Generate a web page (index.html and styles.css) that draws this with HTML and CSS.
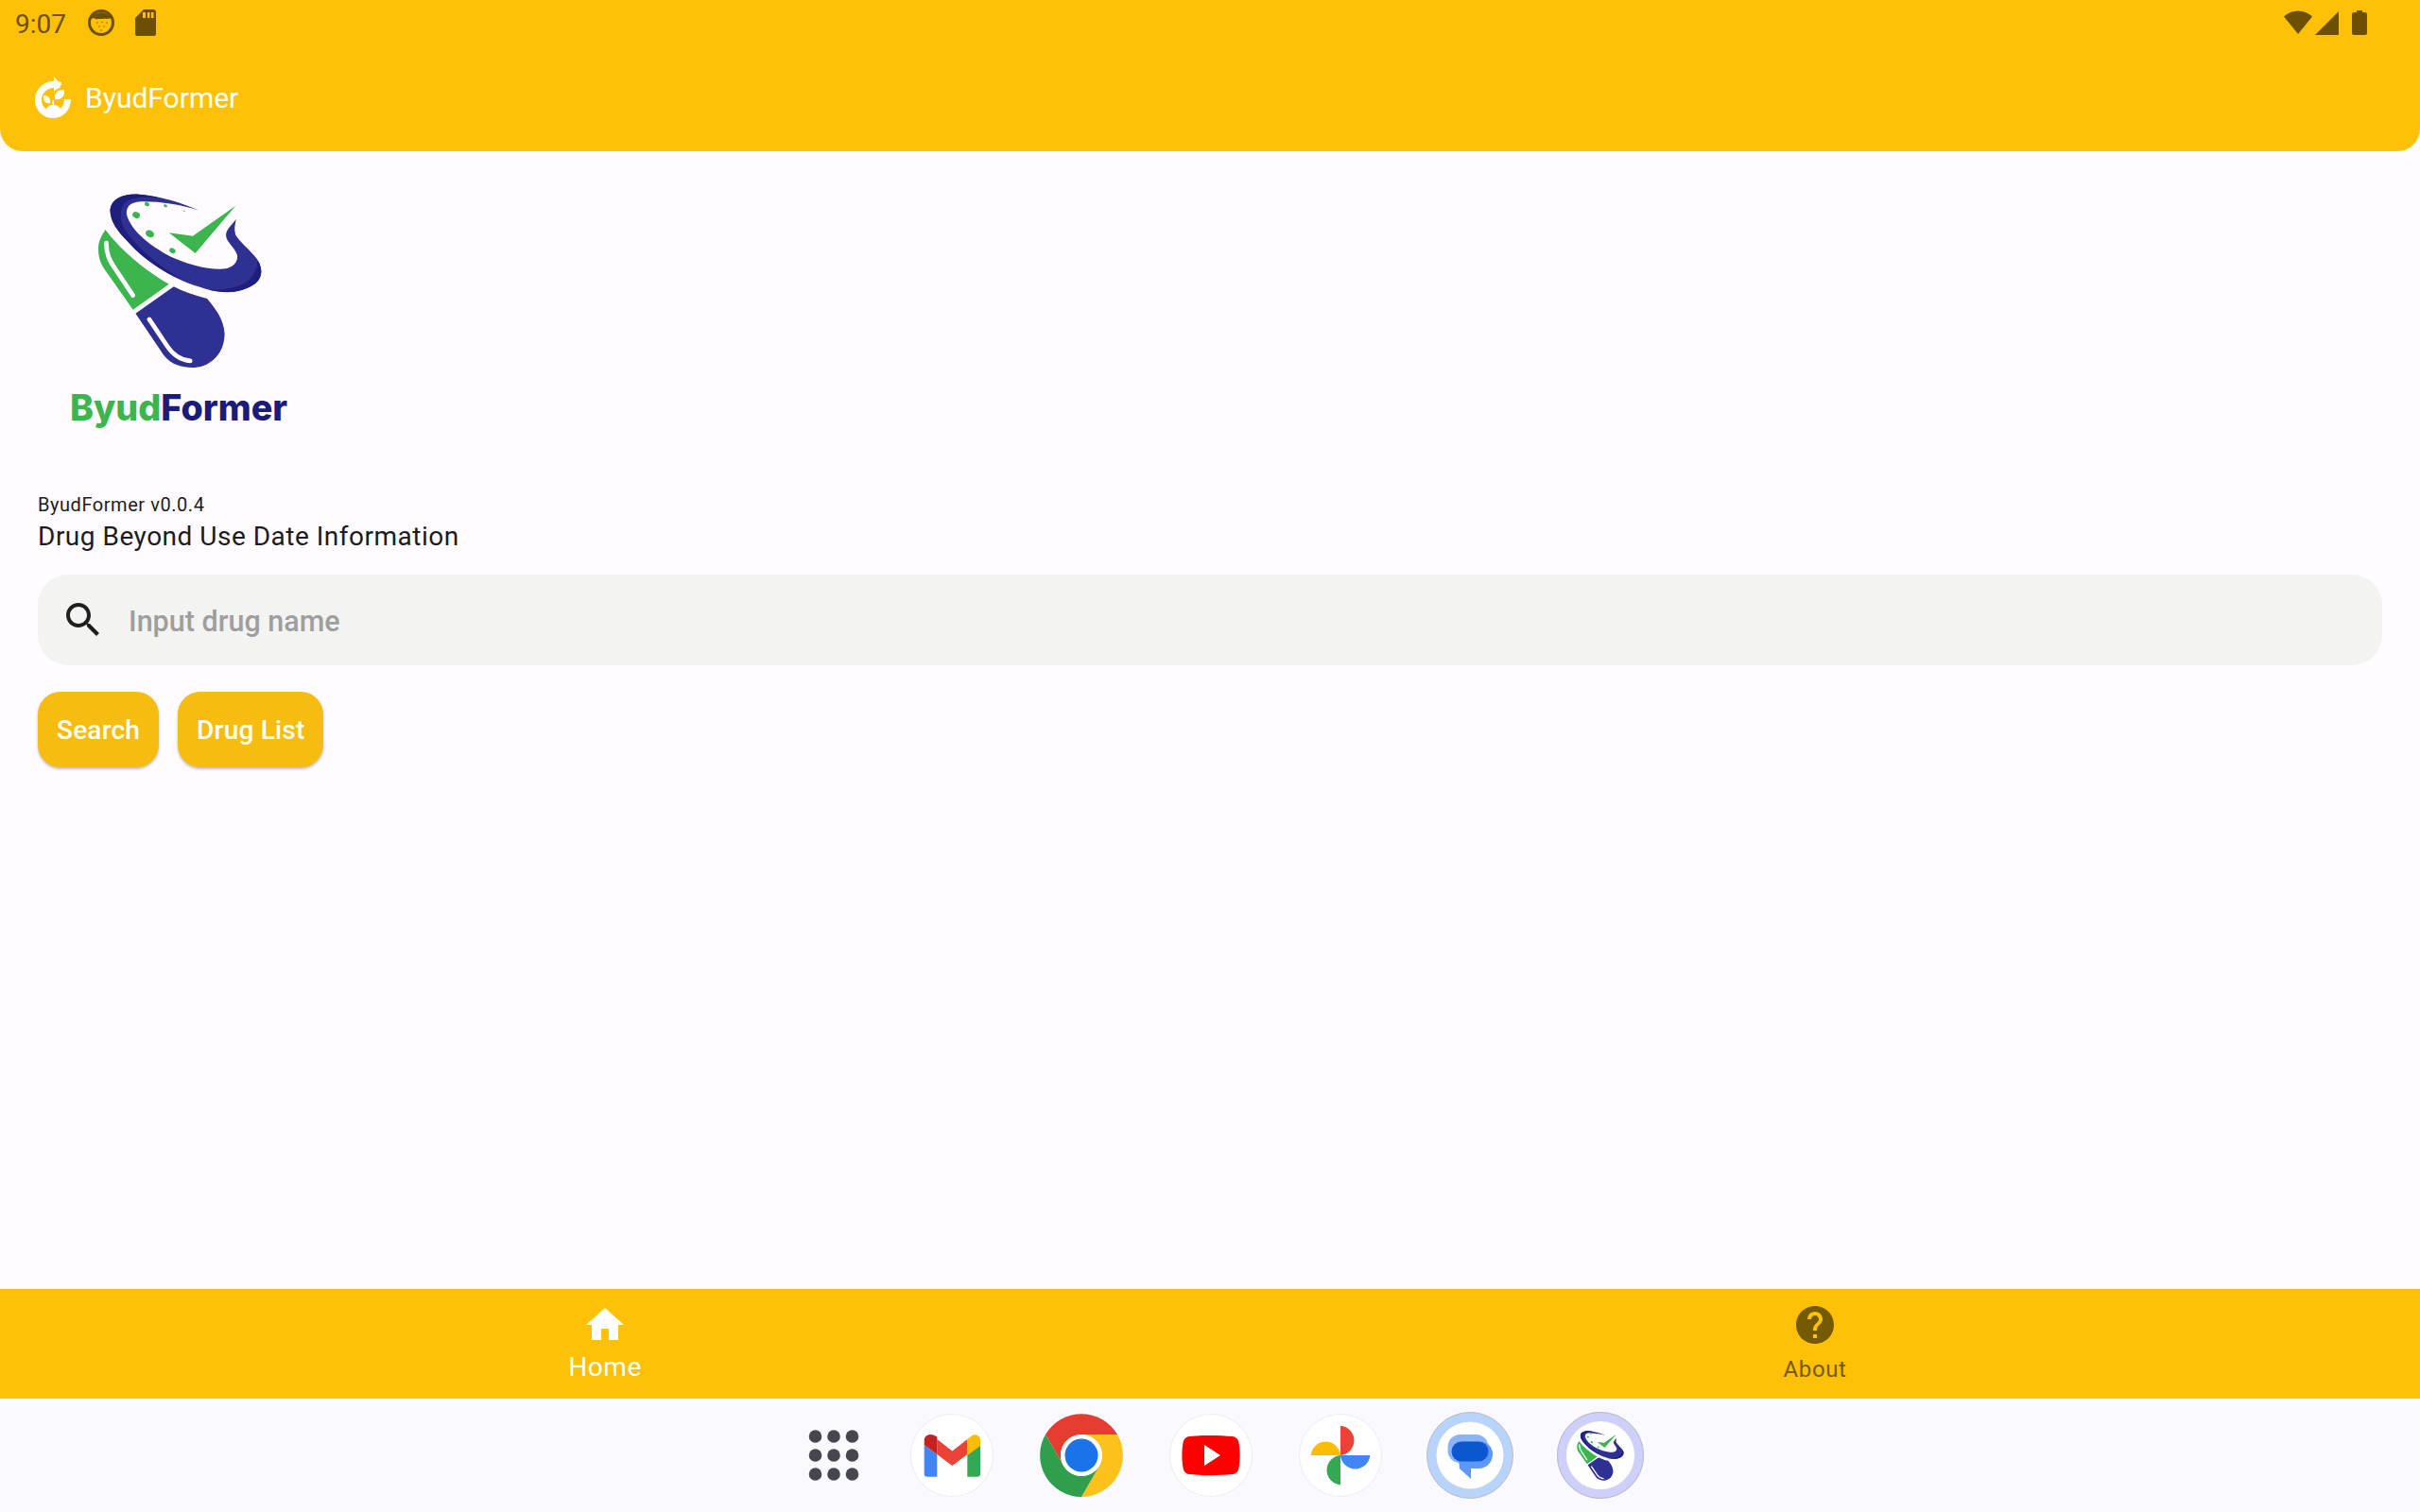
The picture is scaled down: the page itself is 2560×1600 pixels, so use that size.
FILE: index.html
```html
<!DOCTYPE html>
<html lang="en">
<head>
<meta charset="utf-8">
<title>ByudFormer</title>
<link rel="stylesheet" href="styles.css">
</head>
<body>
<svg class="defs" width="0" height="0" aria-hidden="true">
  <symbol id="brand" viewBox="190 75 520 550">
    <path fill="#3cb54f" d="M215 188 C200 212 192 228 193 250 C193 275 200 295 212 312 L302 440 L415 360 C340 315 270 260 215 188 Z"/>
    <path fill="none" stroke="#fffbff" stroke-width="14" stroke-linecap="round" d="M218 230 C218 265 228 285 245 310 L302 395"/>
    <path fill="#2e3192" d="M430 367 L310 452 L400 585 C425 615 460 623 495 622 C550 618 590 575 590 515 C588 470 560 435 535 405 C495 395 460 382 430 367 Z"/>
    <path fill="none" stroke="#fffbff" stroke-width="14" stroke-linecap="round" d="M353 470 L410 555 C430 585 452 598 482 601"/>
    <path fill="#2e3192" d="M510 128 C450 108 380 98 320 100 C288 102 275 125 285 150 C300 190 345 230 400 262 C460 295 530 312 575 312 C610 312 632 295 630 270 C625 245 590 225 595 200 C598 185 615 170 626 155 C624 170 618 185 625 205 C640 230 680 262 695 285 C712 315 708 345 680 362 C640 388 570 392 510 368 C420 340 340 285 290 230 C255 195 230 165 230 125 C235 90 270 75 320 77 C390 82 460 105 510 128 Z"/>
    <path fill="#1e1f7c" d="M320 77 C270 75 235 90 230 125 C230 165 255 195 290 230 C330 275 390 318 455 345 C380 300 320 250 278 190 C258 160 258 120 280 100 C300 85 350 82 400 92 C375 84 345 78 320 77 Z"/>
    <path fill="#1e1f7c" d="M695 285 C712 315 708 345 680 362 C640 388 590 390 540 377 C590 380 650 368 672 340 C690 320 692 300 695 285 Z"/>
    <path fill="#3cb54f" d="M415 198 L490 208 L625 113 L498 262 Z"/>
    <ellipse fill="#3cb54f" cx="312" cy="142" rx="12" ry="10" transform="rotate(25 312 142)"/>
    <ellipse fill="#3cb54f" cx="346" cy="108" rx="8" ry="6" transform="rotate(25 346 108)"/>
    <ellipse fill="#3cb54f" cx="404" cy="113" rx="6" ry="4" transform="rotate(30 404 113)"/>
    <circle fill="#3cb54f" cx="463" cy="130" r="2"/>
    <ellipse fill="#3cb54f" cx="355" cy="201" rx="14" ry="11" transform="rotate(30 355 201)"/>
    <ellipse fill="#3cb54f" cx="426" cy="254" rx="10" ry="8" transform="rotate(30 426 254)"/>
  </symbol>
</svg>

<div class="screen">
  <header class="appbar">
    <div class="status">
      <span class="clock">9:07</span>
      <svg class="st-face" viewBox="0 0 30 30"><circle cx="15" cy="15" r="12.5" fill="none" stroke="#6b5000" stroke-width="3"/><path fill="#6b5000" d="M4 11 C7 2 23 2 26 11 C23 9.500 22 12 19 10.500 C16 12 13 10 10 11.500 C8 10 6 10 4 11 Z"/><g fill="#8a6a00"><circle cx="11" cy="15" r=".8"/><circle cx="16" cy="14.500" r=".8"/><circle cx="21" cy="15" r=".8"/><circle cx="13" cy="19" r=".8"/><circle cx="18" cy="19" r=".8"/><circle cx="15" cy="23" r=".8"/></g></svg>
      <svg class="st-sd" viewBox="0 0 22 28"><path fill="#6b5000" fill-rule="evenodd" d="M9 0 H19 A3 3 0 0 1 22 3 V26 A2 2 0 0 1 20 28 H2 A2 2 0 0 1 0 26 V9 Z M8 3 V9 H11 V3 Z M13 3 V9 H15.500 V3 Z M17 3 V9 H19.500 V3 Z"/></svg>
      <span class="spacer"></span>
      <svg class="st-wifi" viewBox="0 0 30 26"><path fill="#6b5000" d="M0 6.500 C8 -1.500 22 -1.500 30 6.500 L15 25 Z"/></svg>
      <svg class="st-signal" viewBox="0 0 25 25"><path fill="#6b5000" d="M25 0 V25 H0 Z"/></svg>
      <svg class="st-batt" viewBox="0 0 16 26"><path fill="#6b5000" d="M5 0 H11 V2 H14 A2 2 0 0 1 16 4 V24 A2 2 0 0 1 14 26 H2 A2 2 0 0 1 0 24 V4 A2 2 0 0 1 2 2 H5 Z"/></svg>
    </div>
    <div class="titlebar">
      <svg class="app-icon" viewBox="0 0 38 44"><path fill="none" stroke="#fff" stroke-width="7" d="M27 9.500 C14 5 3.500 14 3.500 25 C3.500 34 11 40.500 19 40.500 C28 40.500 34.500 33 34.500 24"/><path fill="#fff" d="M20 0 L28 9 L20 16 Z"/><path fill="#fff" d="M21 24 C20 17 24 14 31 14 C32 21 28 25 21 24 Z M16 28 C11 29 9 26 9 20 C14 20 17 23 16 28 Z M11 36 C13 31 16 30 18.500 30 V25 H20 V30 C24 30 27 33 28 36 C23 40 16 40 11 36 Z"/></svg>
      <span class="app-title">ByudFormer</span>
    </div>
  </header>

  <main class="content">
    <svg class="logo"><use href="#brand"/></svg>
    <div class="wordmark"><span class="wm-green">Byud</span><span class="wm-navy">Former</span></div>
    <p class="version">ByudFormer v0.0.4</p>
    <p class="subtitle">Drug Beyond Use Date Information</p>
    <div class="searchbox">
      <svg class="search-icon" viewBox="0 0 24 24"><path fill="#1f1f1f" d="M15.500 14h-.79l-.28-.27C15.410 12.590 16 11.110 16 9.500 16 5.910 13.090 3 9.500 3S3 5.910 3 9.500 5.910 16 9.500 16c1.610 0 3.090-.59 4.230-1.570l.27.28v.79l5 4.990L20.490 19l-4.990-5zm-6 0C7.010 14 5 11.990 5 9.500S7.010 5 9.500 5 14 7.010 14 9.500 11.990 14 9.500 14z"/></svg>
      <span class="placeholder">Input drug name</span>
    </div>
    <div class="actions">
      <button class="btn">Search</button>
      <button class="btn">Drug List</button>
    </div>
  </main>

  <nav class="bottomnav">
    <div class="navitem active">
      <svg class="nav-icon" viewBox="0 0 24 24"><path fill="#fff" d="M10 20v-6h4v6h5v-8h3L12 3 2 12h3v8z"/></svg>
      <span class="nav-label">Home</span>
    </div>
    <div class="navitem">
      <svg class="nav-icon" viewBox="0 0 24 24"><path fill="#745a00" d="M12 2C6.480 2 2 6.480 2 12s4.480 10 10 10 10-4.480 10-10S17.520 2 12 2zm1 17h-2v-2h2v2zm2.070-7.750l-.9.920C13.450 12.900 13 13.500 13 15h-2v-.5c0-1.100.45-2.100 1.170-2.830l1.240-1.260c.37-.36.59-.86.59-1.410 0-1.100-.9-2-2-2s-2 .9-2 2H8c0-2.210 1.790-4 4-4s4 1.790 4 4c0 .88-.36 1.680-.93 2.250z"/></svg>
      <span class="nav-label">About</span>
    </div>
  </nav>

  <footer class="taskbar">
    <svg class="apps" viewBox="0 0 65 64"><g fill="#46464f"><circle cx="13.500" cy="12" r="6.800"/><circle cx="33" cy="12" r="6.800"/><circle cx="52.500" cy="12" r="6.800"/><circle cx="13.500" cy="32" r="6.800"/><circle cx="33" cy="32" r="6.800"/><circle cx="52.500" cy="32" r="6.800"/><circle cx="13.500" cy="52" r="6.800"/><circle cx="33" cy="52" r="6.800"/><circle cx="52.500" cy="52" r="6.800"/></g></svg>

    <svg class="dock-icon" viewBox="0 0 88 88"><circle class="plate" cx="44" cy="44" r="43.500"/>
      <path fill="#4285f4" d="M14.700 33 L28.300 43 V66.700 H17.700 A3 3 0 0 1 14.700 63.700 Z"/>
      <path fill="#34a853" d="M74 33 L60.300 43 V66.700 H71 A3 3 0 0 0 74 63.700 Z"/>
      <path fill="#ea4335" d="M28.300 27 L44.300 39.500 L60.300 27 V43 L44.300 55 L28.300 43 Z"/>
      <path fill="#c5221f" d="M14.700 28 C14.700 21.500 23 20 28.300 24.500 V43 L14.700 33 Z"/>
      <path fill="#fbbc04" d="M60.300 27 L64 24 C68 20.500 74 22.500 74 28 V34 L60.300 44 Z"/>
    </svg>

    <svg class="dock-icon" viewBox="0 0 88 88">
      <path fill="#e53d2f" d="M6 22 A44 44 0 0 1 82 22 L44 22 A22 22 0 0 0 25 55 Z"/>
      <path fill="#fcc219" d="M82 22 A44 44 0 0 1 44 88 L63 55 A22 22 0 0 0 44 22 Z"/>
      <path fill="#2f9e4d" d="M44 88 A44 44 0 0 1 6 22 L25 55 A22 22 0 0 0 63 55 Z"/>
      <circle cx="44" cy="44" r="22" fill="#fff"/><circle cx="44" cy="44" r="17.500" fill="#1a73e8"/>
    </svg>

    <svg class="dock-icon" viewBox="0 0 88 88"><circle class="plate" cx="44" cy="44" r="43.500"/>
      <path fill="#f00" d="M21 24 C35 22.500 53 22.500 67 24 C71 24.500 73 27 73.500 31 C75 39 75 49 73.500 57 C73 61 71 63.500 67 64 C53 65.500 35 65.500 21 64 C17 63.500 15 61 14.500 57 C13 49 13 39 14.500 31 C15 27 17 24.500 21 24 Z"/>
      <path fill="#fff" d="M37 33 L54 44 L37 55 Z"/>
    </svg>

    <svg class="dock-icon" viewBox="0 0 88 88"><circle class="plate" cx="44" cy="44" r="43.500"/>
      <path fill="#ea4335" d="M44 44 V12.700 A15.700 15.700 0 0 1 44 44 Z"/>
      <path fill="#fbbc04" d="M44 44 H12.700 A15.700 15.700 0 0 1 44 44 Z"/>
      <path fill="#4285f4" d="M44 44 H75.300 A15.700 15.700 0 0 1 44 44 Z"/>
      <path fill="#34a853" d="M44 44 V75.300 A15.700 15.700 0 0 1 44 44 Z"/>
    </svg>

    <svg class="dock-icon ringed" viewBox="0 0 92 92"><circle cx="46" cy="46" r="45.500" fill="#b9d4fb" stroke="#b9bcc6" stroke-width="1"/><circle cx="46" cy="46" r="35.500" fill="#fff"/>
      <rect x="22.500" y="24" width="43" height="30" rx="13" fill="#8ab4f8"/>
      <path fill="#5e97f6" d="M39 31.500 H57 A13 13 0 0 1 70 44.500 A15 15 0 0 1 55 60 H47 V71 L35 60 L33 41 Z"/>
      <rect x="26.500" y="31.500" width="39" height="21" rx="10.500" fill="#0b57d0"/>
    </svg>

    <span class="ring-wrap">
      <svg class="brand-mini"><use href="#brand"/></svg>
    </span>
  </footer>
</div>
</body>
</html>
```

FILE: styles.css
```css
* { box-sizing: border-box; }
html, body { margin: 0; padding: 0; }
body { background: #fffbff; font-family: Roboto, "Liberation Sans", sans-serif; }
.defs { position: absolute; }
.screen { width: 2560px; height: 1600px; display: flex; flex-direction: column; overflow: hidden; }

.appbar { height: 160px; background: #ffc107; border-radius: 0 0 24px 24px; padding: 0 56px 0 16px; flex: none; }
.status { height: 50px; display: flex; align-items: center; color: #6b5000; }
.clock { font-size: 28px; width: 76px; }
.st-face { width: 30px; height: 30px; margin-right: 21px; margin-top: -2px; }
.st-sd { width: 22px; height: 28px; margin-top: -2px; }
.spacer { flex: 1; }
.st-wifi { width: 30px; height: 26px; margin-right: 3px; margin-top: -3px; }
.st-signal { width: 25px; height: 25px; margin-right: 14px; margin-top: -2px; }
.st-batt { width: 16px; height: 26px; margin-top: -3px; }
.titlebar { display: flex; align-items: center; height: 48px; margin-top: 29px; padding-left: 21px; }
.app-icon { width: 38px; height: 44px; margin-right: 15px; }
.app-title { color: #fff; font-size: 30px; letter-spacing: 0; }

.content { flex: 1; padding: 45px 40px 0 40px; }
.logo { display: block; width: 175px; height: 185px; margin-left: 63px; }
.wordmark { font-family: Inter, sans-serif; font-weight: 800; font-size: 37.700px; line-height: 46px; margin: 18px 0 0 34px; letter-spacing: 0; }
.wm-green { color: #3cb54f; }
.wm-navy { color: #1b1b78; }
.version { margin: 68px 0 0; font-size: 20px; line-height: 24px; letter-spacing: .55px; color: #1c1b1f; }
.subtitle { margin: 2px 0 0; font-size: 28px; line-height: 40px; letter-spacing: .5px; color: #1c1b1f; }
.searchbox { margin-top: 20px; height: 96px; background: #f3f4f2; border-radius: 32px; display: flex; align-items: center; padding-left: 24px; }
.search-icon { width: 48px; height: 48px; margin-right: 24px; }
.placeholder { font-size: 30.500px; color: #9e9e9e; font-weight: 500; margin-top: 2px; }
.actions { display: flex; gap: 20px; margin-top: 28px; }
.btn { height: 80px; padding: 0 20px; border: 0; border-radius: 24px; background: #f7bc10; color: #fff; font: 500 28px Roboto, sans-serif; letter-spacing: .2px; box-shadow: 0 2px 3px rgba(0,0,0,.25); }

.bottomnav { height: 116px; flex: none; background: #ffc107; display: grid; grid-template-columns: 1fr 1fr; }
.navitem { display: flex; flex-direction: column; align-items: center; padding-top: 14px; }
.nav-icon { width: 48px; height: 48px; display: block; }
.nav-label { font-size: 24px; line-height: 30px; margin-top: 8px; color: #745a00; letter-spacing: .6px; }
.active .nav-label { font-size: 28px; color: #fff; line-height: 32px; margin-top: 5px; }

.taskbar { height: 120px; flex: none; background: #f9f9ff; display: flex; align-items: center; gap: 49px; padding-left: 849px; }
.apps { width: 65px; height: 64px; flex: none; }
.dock-icon { width: 88px; height: 88px; flex: none; }
.dock-icon.ringed { width: 92px; height: 92px; margin-left: -2px; }
.plate { fill: #fff; stroke: #ecedf3; stroke-width: 1; }
.ring-wrap { width: 92px; height: 92px; flex: none; margin-left: -3px; border-radius: 50%; background: #fff; border: 10px solid #cfd0fa; outline: 1px solid #b9bcc6; outline-offset: -1px; display: flex; align-items: center; justify-content: center; }
.brand-mini { width: 50px; height: 53px; }
```
